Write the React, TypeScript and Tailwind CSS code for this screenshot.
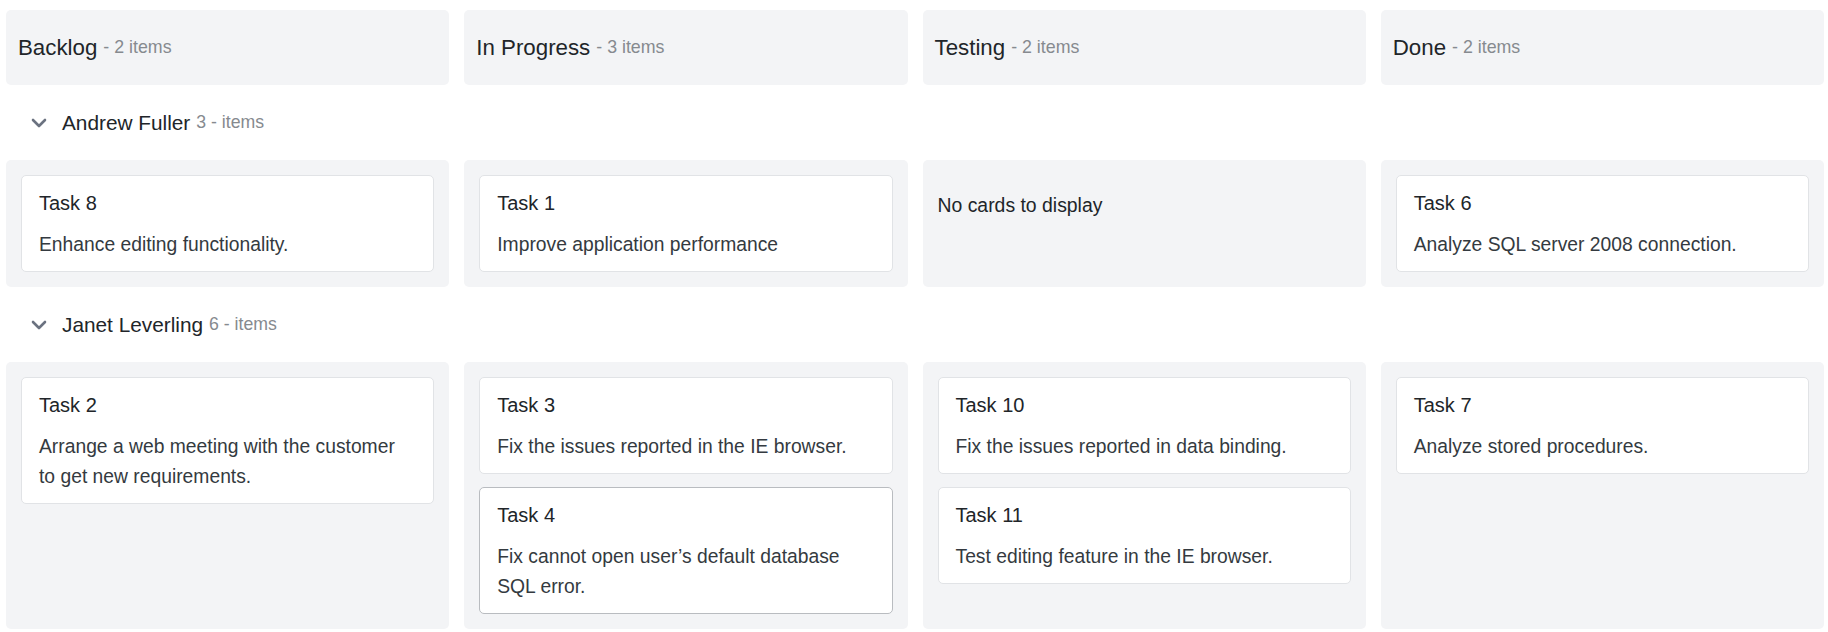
import React from "react";

type Card = { id: string; title: string; summary: string; active?: boolean };
type Lane = { name: string; count: number; columns: Card[][] };

const columns = [
  { key: "backlog", label: "Backlog", count: 2 },
  { key: "progress", label: "In Progress", count: 3 },
  { key: "testing", label: "Testing", count: 2 },
  { key: "done", label: "Done", count: 2 },
];

const lanes: Lane[] = [
  {
    name: "Andrew Fuller",
    count: 3,
    columns: [
      [{ id: "8", title: "Task 8", summary: "Enhance editing functionality." }],
      [{ id: "1", title: "Task 1", summary: "Improve application performance" }],
      [],
      [{ id: "6", title: "Task 6", summary: "Analyze SQL server 2008 connection." }],
    ],
  },
  {
    name: "Janet Leverling",
    count: 6,
    columns: [
      [{ id: "2", title: "Task 2", summary: "Arrange a web meeting with the customer to get new requirements." }],
      [
        { id: "3", title: "Task 3", summary: "Fix the issues reported in the IE browser." },
        { id: "4", title: "Task 4", summary: "Fix cannot open user’s default database SQL error.", active: true },
      ],
      [
        { id: "10", title: "Task 10", summary: "Fix the issues reported in data binding." },
        { id: "11", title: "Task 11", summary: "Test editing feature in the IE browser." },
      ],
      [{ id: "7", title: "Task 7", summary: "Analyze stored procedures." }],
    ],
  },
];

function Chevron() {
  return (
    <svg width="16" height="10" viewBox="0 0 16 10" className="shrink-0">
      <path d="M2 2 L8 8 L14 2" fill="none" stroke="#6b7280" strokeWidth="2.6" strokeLinecap="round" strokeLinejoin="round" />
    </svg>
  );
}

function TaskCard({ card }: { card: Card }) {
  return (
    <div
      className={`rounded-[5px] border bg-white pl-[17px] pr-6 pt-3 pb-[11px] ${
        card.active ? "border-[#b9bcc0]" : "border-[#e1e3e6]"
      }`}
    >
      <div className="text-[20px] leading-[30px] text-[#212529]">{card.title}</div>
      <div className="mt-3 text-[19.3px] leading-[30px] text-[#343a40]">{card.summary}</div>
    </div>
  );
}

export default function App() {
  return (
    <div className="min-h-[632px] bg-white pl-[6px] pr-[4px] pt-[10px] pb-[5px] font-['Liberation_Sans',Arial,sans-serif]">
      <div className="grid grid-cols-4 gap-x-[15px]">
        {columns.map((col) => (
          <div key={col.key} className="flex h-[75px] items-center rounded-[5px] bg-[#f3f4f6] px-3">
            <span className="text-[22.3px] text-[#212529]">{col.label}</span>
            <span className="ml-[6px] text-[17.8px] text-[#868a8f]">- {col.count} items</span>
          </div>
        ))}
      </div>

      {lanes.map((lane) => (
        <div key={lane.name}>
          <div className="flex h-[75px] items-center pl-[25px]">
            <Chevron />
            <span className="ml-[15px] text-[20.8px] text-[#212529]">{lane.name}</span>
            <span className="ml-[6px] text-[17.7px] text-[#868a8f]">{lane.count} - items</span>
          </div>
          <div className="grid grid-cols-4 gap-x-[15px]">
            {lane.columns.map((cards, i) => (
              <div key={i} className="flex flex-col gap-[13px] rounded-[5px] bg-[#f3f4f6] px-[15px] pt-[15px] pb-[15px]">
                {cards.length === 0 ? (
                  <div className="pt-[15px] pb-[52px] text-[19.4px] leading-[30px] text-[#212529]">No cards to display</div>
                ) : (
                  cards.map((card) => <TaskCard key={card.id} card={card} />)
                )}
              </div>
            ))}
          </div>
        </div>
      ))}
    </div>
  );
}
